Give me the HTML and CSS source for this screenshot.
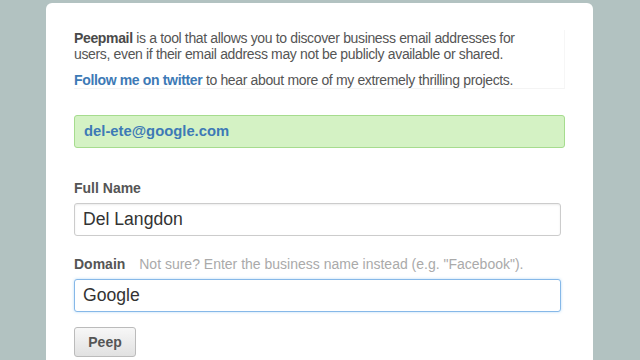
FILE: index.html
```html
<!DOCTYPE html>
<html lang="en">
<head>
    <meta charset="UTF-8">
    <title>Peepmail</title>
    <link rel="stylesheet" href="styles.css">
</head>
<body>

<div class="card">
    <div class="intro">
        <p><strong>Peepmail</strong> is a tool that allows you to discover business email addresses for users, even if their email address may not be publicly available or shared.</p>
        <p><a href="#">Follow me on twitter</a> to hear about more of my extremely thrilling projects.</p>
    </div>

    <!-- Résultat -->
    <div class="result">del-ete@google.com</div>

    <div class="field">
        <label for="fullName">Full Name</label>
        <input type="text" id="fullName" value="Del Langdon">
    </div>

    <div class="field last">
        <label for="domain">Domain <span class="hint">Not sure? Enter the business name instead (e.g. "Facebook").</span></label>
        <input type="text" id="domain" class="focused" value="Google">
    </div>

    <button class="btn">Peep</button>
</div>

</body>
</html>
```

FILE: styles.css
```css
body {
    margin: 0;
    background-color: #b2c2c1;
    font-family: "Liberation Sans", Arial, sans-serif;
    color: #555;
    overflow: hidden;
}

.card {
    margin: 3px 0 0 46px;
    width: 491px;
    height: 400px;
    padding: 27px 28px 0 28px;
    background-color: #fff;
    border-radius: 6px;
}

.intro {
    border-bottom: 1px solid #f4f4f4;
    border-right: 1px solid #f6f6f6;
    margin-bottom: 26px;
}

.intro p {
    width: 450px;
    margin: 0 0 10px 0;
    font-size: 14px;
    letter-spacing: -0.35px;
    line-height: 16px;
}

.intro p:last-child {
    margin-bottom: 0;
}

.intro strong {
    color: #4a4a4a;
}

.intro a {
    color: #3d7ab6;
    font-weight: bold;
    text-decoration: none;
}

.result {
    height: 31px;
    line-height: 31px;
    padding: 0 9px;
    background-color: #d4f2c4;
    border: 1px solid #a6dc8e;
    border-radius: 3px;
    color: #3d7ab6;
    font-weight: bold;
    font-size: 14.8px;
    margin-bottom: 32px;
}

.field {
    margin-bottom: 20px;
}

.field.last {
    margin-bottom: 15px;
}

.field label {
    display: block;
    font-size: 14px;
    font-weight: bold;
    color: #555;
    margin-bottom: 7px;
}

.hint {
    font-weight: normal;
    color: #aaa;
    margin-left: 10px;
}

.field input {
    width: 487px;
    height: 33px;
    box-sizing: border-box;
    padding: 0 8px;
    border: 1px solid #ccc;
    border-radius: 3px;
    font-family: "Liberation Sans", Arial, sans-serif;
    font-size: 17.6px;
    color: #333;
    box-shadow: inset 0 1px 2px rgba(0, 0, 0, 0.08);
    outline: none;
}

.field input.focused {
    border-color: #86b8e8;
    box-shadow: 0 0 3px rgba(82, 168, 236, 0.4);
}

.btn {
    width: 62px;
    height: 30px;
    border: 1px solid #bbb;
    border-radius: 3px;
    background: linear-gradient(#f7f7f7, #e1e1e1);
    color: #555;
    font-family: "Liberation Sans", Arial, sans-serif;
    font-weight: bold;
    font-size: 14px;
}
```
